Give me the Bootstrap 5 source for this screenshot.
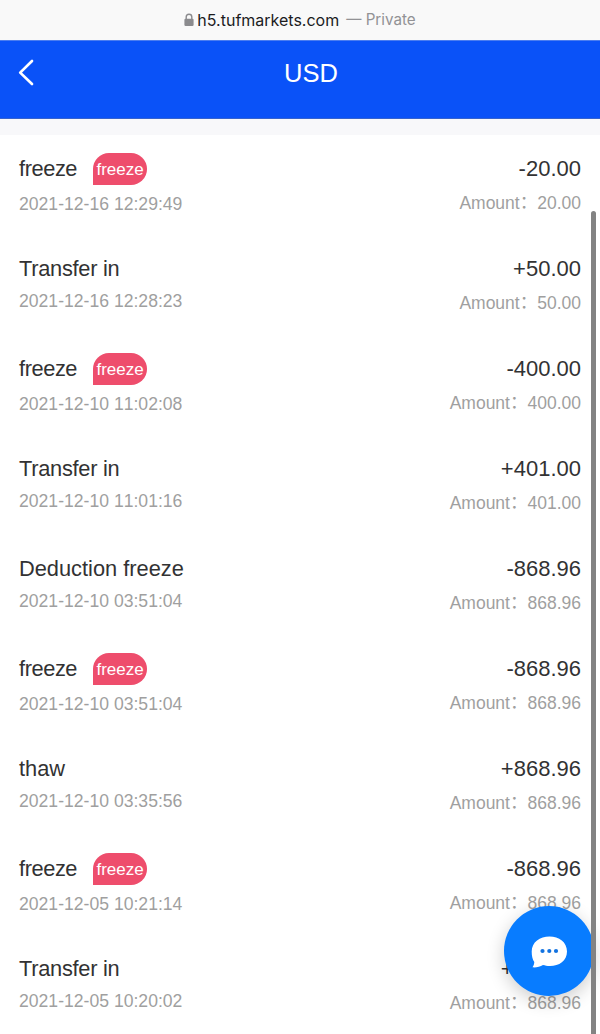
<!DOCTYPE html>
<html lang="en">
<head>
<meta charset="utf-8">
<meta name="viewport" content="width=device-width, initial-scale=1">
<title>USD</title>
<link href="https://cdn.jsdelivr.net/npm/bootstrap@5.3.0/dist/css/bootstrap.min.css" rel="stylesheet">
<style>
  html, body { height: 100%; overflow: hidden; }
  body { font-family: "Liberation Sans", "Noto Sans CJK SC", sans-serif; background: #fff; color: #323233; }
  .address-bar { height: 40px; background: #f9f9f9; font: 16px/38px Inter, sans-serif; color: #929295; padding-bottom: 1px; }
  .host { color: #1c1c1e; margin: 0 7px 0 3px; }
  .private { font-size: 15.2px; }
  .title-bar { height: 79px; background: #0a52f8; color: #fff; border-top: 1px solid #4b7df0; border-bottom: 1px solid #3563cf; padding-bottom: 13px; }
  .back { left: 18px; top: 18px; }
  .page-title { font-size: 25.5px; line-height: 30px; padding-left: 22px; }
  .gap-strip { height: 16px; background: #f8f8fa; }
  .entry { height: 100px; padding: 16px 19px 0; }
  .entry-title { height: 36px; font-size: 21.8px; line-height: 35px; }
  .short { letter-spacing: -.28px; }
  .tagged .entry-title { letter-spacing: -.42px; }
  .entry-date { font-size: 17.6px; line-height: 24px; margin-top: 2px; color: #9f9fa0; font-kerning: none; }
  .tagged .entry-date { margin-top: 5px; }
  .tag { width: 54px; height: 32px; margin: 2px 0 0 16px; border-radius: 16px 16px 16px 0; background: #ee4d6c; color: #fff; font-size: 17px; line-height: 33px; text-align: center; letter-spacing: 0; }
  .entry-sum { font-size: 22px; line-height: 35px; }
  .entry-amount { font-size: 17.5px; line-height: 24px; margin-top: 5px; color: #9f9fa0; }
  .colon { display: inline-block; line-height: 1; transform: translateY(-1px); }
  .scroll-thumb { right: 4px; top: 211px; width: 5px; height: 840px; border-radius: 3px; background: #838383; z-index: 3; }
  .chat { left: 504px; top: 906px; width: 90px; height: 90px; background: #087cff; box-shadow: 0 5px 18px rgba(0,0,0,.2); z-index: 2; }
</style>
<script src="https://cdn.jsdelivr.net/npm/bootstrap@5.3.0/dist/js/bootstrap.bundle.min.js"></script>
</head>
<body class="position-relative">
<div class="address-bar d-flex justify-content-center align-items-center">
  <svg width="10" height="14" viewBox="0 0 10 14"><path d="M2.2 6V4a2.8 2.8 0 0 1 5.6 0v2" fill="none" stroke="#8b8b8e" stroke-width="1.4"/><rect x=".4" y="5.8" width="9.2" height="7.2" rx="1.2" fill="#8b8b8e"/></svg>
  <span class="host">h5.tufmarkets.com</span><span class="private">— Private</span>
</div>
<header class="title-bar position-relative d-flex justify-content-center align-items-center">
  <svg class="back position-absolute" width="18" height="28" viewBox="0 0 18 28"><path d="M14 2 2.200 13.600 14 25" fill="none" stroke="#fff" stroke-width="2.700" stroke-linecap="round" stroke-linejoin="round"/></svg>
  <div class="page-title">USD</div>
</header>
<div class="gap-strip"></div>
<main>
  <div class="entry tagged d-flex justify-content-between"><div><div class="entry-title d-flex">freeze<span class="tag">freeze</span></div><div class="entry-date">2021-12-16 12:29:49</div></div><div class="text-end"><div class="entry-sum">-20.00</div><div class="entry-amount">Amount<span class="colon">：</span>20.00</div></div></div>
  <div class="entry d-flex justify-content-between"><div><div class="entry-title short">Transfer in</div><div class="entry-date">2021-12-16 12:28:23</div></div><div class="text-end"><div class="entry-sum">+50.00</div><div class="entry-amount">Amount<span class="colon">：</span>50.00</div></div></div>
  <div class="entry tagged d-flex justify-content-between"><div><div class="entry-title d-flex">freeze<span class="tag">freeze</span></div><div class="entry-date">2021-12-10 11:02:08</div></div><div class="text-end"><div class="entry-sum">-400.00</div><div class="entry-amount">Amount<span class="colon">：</span>400.00</div></div></div>
  <div class="entry d-flex justify-content-between"><div><div class="entry-title short">Transfer in</div><div class="entry-date">2021-12-10 11:01:16</div></div><div class="text-end"><div class="entry-sum">+401.00</div><div class="entry-amount">Amount<span class="colon">：</span>401.00</div></div></div>
  <div class="entry d-flex justify-content-between"><div><div class="entry-title">Deduction freeze</div><div class="entry-date">2021-12-10 03:51:04</div></div><div class="text-end"><div class="entry-sum">-868.96</div><div class="entry-amount">Amount<span class="colon">：</span>868.96</div></div></div>
  <div class="entry tagged d-flex justify-content-between"><div><div class="entry-title d-flex">freeze<span class="tag">freeze</span></div><div class="entry-date">2021-12-10 03:51:04</div></div><div class="text-end"><div class="entry-sum">-868.96</div><div class="entry-amount">Amount<span class="colon">：</span>868.96</div></div></div>
  <div class="entry d-flex justify-content-between"><div><div class="entry-title">thaw</div><div class="entry-date">2021-12-10 03:35:56</div></div><div class="text-end"><div class="entry-sum">+868.96</div><div class="entry-amount">Amount<span class="colon">：</span>868.96</div></div></div>
  <div class="entry tagged d-flex justify-content-between"><div><div class="entry-title d-flex">freeze<span class="tag">freeze</span></div><div class="entry-date">2021-12-05 10:21:14</div></div><div class="text-end"><div class="entry-sum">-868.96</div><div class="entry-amount">Amount<span class="colon">：</span>868.96</div></div></div>
  <div class="entry d-flex justify-content-between"><div><div class="entry-title short">Transfer in</div><div class="entry-date">2021-12-05 10:20:02</div></div><div class="text-end"><div class="entry-sum">+868.96</div><div class="entry-amount">Amount<span class="colon">：</span>868.96</div></div></div>
</main>
<div class="scroll-thumb position-fixed"></div>
<div class="chat position-fixed rounded-circle">
  <svg width="90" height="90" viewBox="0 0 90 90"><path d="M45.500 30.500C55 30.500 63 36 63 45.500S55 60 46 60c-3 0-5-.5-7-1-3 1.500-6.500 2.700-10.500 2.300 1.200-1.800 1.700-3.500 1.800-5.300C28.500 53.500 27.700 50 27.700 45.500 27.700 36 36 30.500 45.500 30.500Z" fill="#fff"/><g fill="#1272e0"><circle cx="38.500" cy="45" r="2.100"/><circle cx="45.300" cy="45" r="2.100"/><circle cx="52" cy="45" r="2.100"/></g></svg>
</div>
</body>
</html>
